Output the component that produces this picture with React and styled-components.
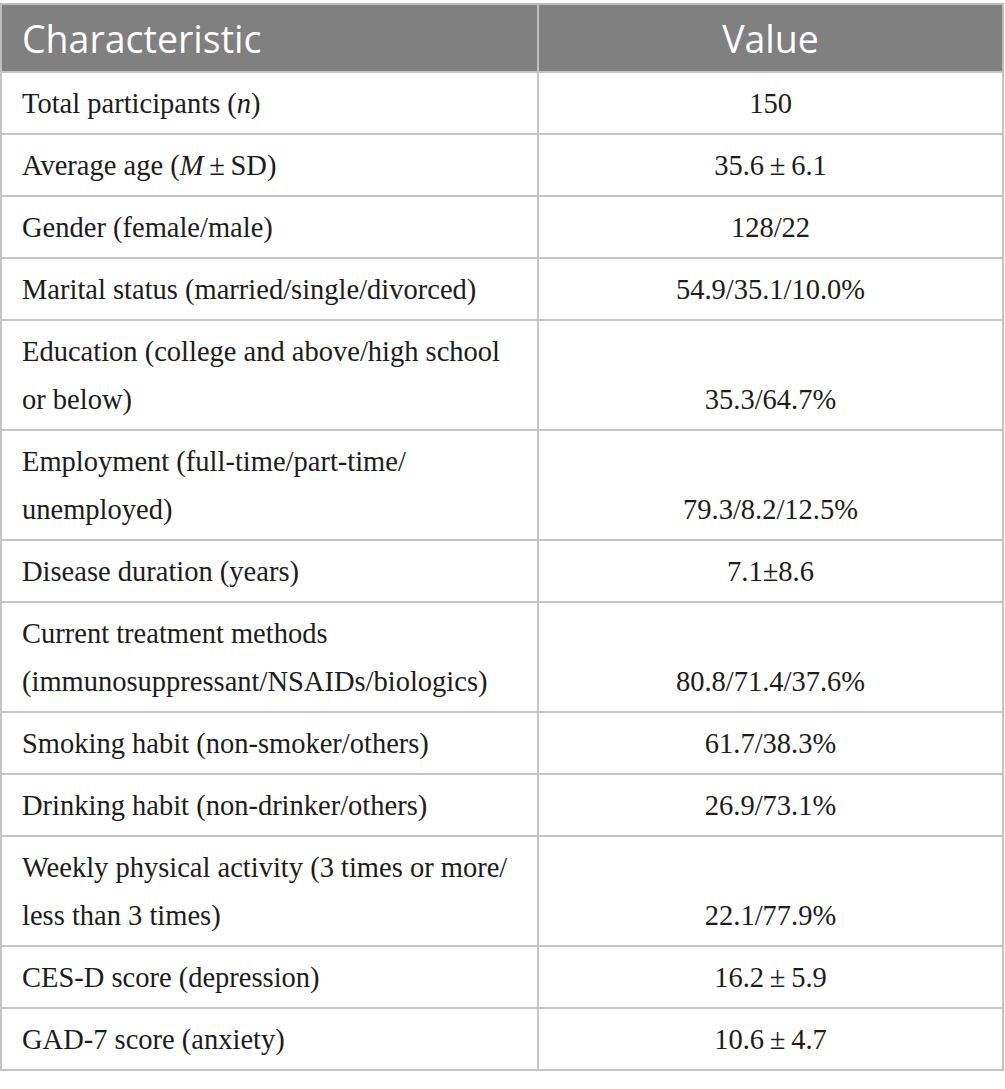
import React from 'react';
import styled, { createGlobalStyle } from 'styled-components';

const GlobalStyle = createGlobalStyle`
  html, body {
    margin: 0;
    padding: 0;
    background: #ffffff;
  }
`;

const Page = styled.div`
  padding: 3px 1px 0 0;
`;

const Table = styled.table`
  width: 1004px;
  border-collapse: collapse;
  border: 2px solid #c4c4c4;
  font-family: "Liberation Serif", "Times New Roman", serif;
  font-size: 28.5px;
  color: #1c1c1c;
`;

const HeadCell = styled.th`
  background: #808080;
  color: #ffffff;
  font-family: "Open Sans", "Noto Sans", sans-serif;
  font-weight: 400;
  font-size: 37.5px;
  height: 68px;
  padding: 1px 20px 0;
  text-align: ${p => (p.$center ? 'center' : 'left')};
  vertical-align: middle;
  border: 2px solid #bdbdbd;
  border-bottom-color: #c4c4c4;
  width: ${p => p.$width || 'auto'};
  box-sizing: border-box;
`;

const Cell = styled.td`
  padding: 7px 20px 5px;
  line-height: 48px;
  border: 2px solid #c4c4c4;
  text-align: ${p => (p.$center ? 'center' : 'left')};
  vertical-align: bottom;
  white-space: nowrap;
`;

const Em = styled.i`
  font-style: italic;
`;

const rows = [
  [<>Total participants (<Em>n</Em>)</>, '150'],
  [<>Average age (<Em>M</Em>{'\u2009±\u2009'}SD)</>, '35.6\u2009±\u20096.1'],
  ['Gender (female/male)', '128/22'],
  ['Marital status (married/single/divorced)', '54.9/35.1/10.0%'],
  [<>Education (college and above/high school<br />or below)</>, '35.3/64.7%'],
  [<>Employment (full-time/part-time/<br />unemployed)</>, '79.3/8.2/12.5%'],
  ['Disease duration (years)', '7.1±8.6'],
  [<>Current treatment methods<br />(immunosuppressant/NSAIDs/biologics)</>, '80.8/71.4/37.6%'],
  ['Smoking habit (non-smoker/others)', '61.7/38.3%'],
  ['Drinking habit (non-drinker/others)', '26.9/73.1%'],
  [<>Weekly physical activity (3 times or more/<br />less than 3 times)</>, '22.1/77.9%'],
  ['CES-D score (depression)', '16.2\u2009±\u20095.9'],
  ['GAD-7 score (anxiety)', '10.6\u2009±\u20094.7'],
];

export default function App() {
  return (
    <Page>
      <GlobalStyle />
      <Table>
        <thead>
          <tr>
            <HeadCell $width="537px">Characteristic</HeadCell>
            <HeadCell $center>Value</HeadCell>
          </tr>
        </thead>
        <tbody>
          {rows.map((r, i) => (
            <tr key={i}>
              <Cell>{r[0]}</Cell>
              <Cell $center>{r[1]}</Cell>
            </tr>
          ))}
        </tbody>
      </Table>
    </Page>
  );
}
